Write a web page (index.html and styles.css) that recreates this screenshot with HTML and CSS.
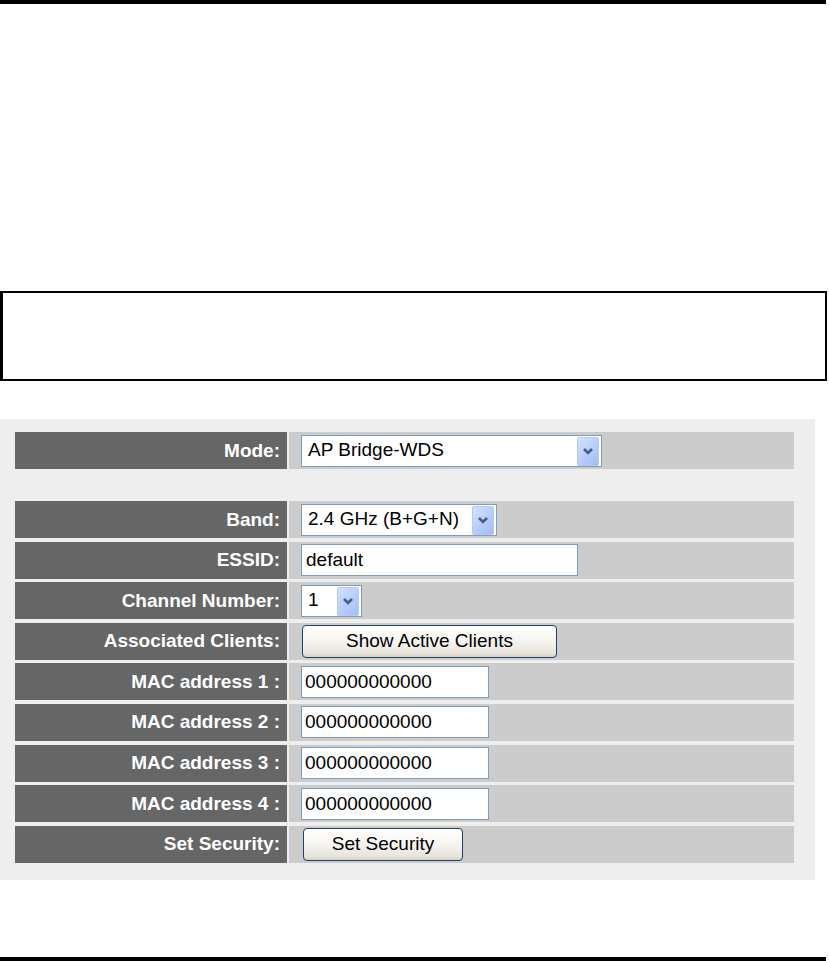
FILE: index.html
```html
<!DOCTYPE html>
<html>
<head>
<meta charset="utf-8">
<title>AP Bridge-WDS</title>
<link rel="stylesheet" href="styles.css">
</head>
<body>
<div class="topbar"></div>
<div class="note"></div>
<div class="panel">
  <div class="row">
    <div class="label">Mode:</div>
    <div class="value">
      <div class="select sel-mode"><span class="sel-text">AP Bridge-WDS</span><span class="sel-btn"><svg width="14" height="10" viewBox="0 0 14 10"><path d="M3 3 L7 7 L11 3" fill="none" stroke="#4a5d80" stroke-width="2.6"/></svg></span></div>
    </div>
  </div>
  <div class="rows">
    <div class="row">
      <div class="label">Band:</div>
      <div class="value">
        <div class="select sel-band"><span class="sel-text">2.4 GHz (B+G+N)</span><span class="sel-btn"><svg width="14" height="10" viewBox="0 0 14 10"><path d="M3 3 L7 7 L11 3" fill="none" stroke="#4a5d80" stroke-width="2.6"/></svg></span></div>
      </div>
    </div>
    <div class="row">
      <div class="label">ESSID:</div>
      <div class="value"><input class="field essid" type="text" value="default"></div>
    </div>
    <div class="row">
      <div class="label">Channel Number:</div>
      <div class="value">
        <div class="select sel-chan"><span class="sel-text">1</span><span class="sel-btn"><svg width="14" height="10" viewBox="0 0 14 10"><path d="M3 3 L7 7 L11 3" fill="none" stroke="#4a5d80" stroke-width="2.6"/></svg></span></div>
      </div>
    </div>
    <div class="row">
      <div class="label">Associated Clients:</div>
      <div class="value"><button class="btn btn-clients" type="button">Show Active Clients</button></div>
    </div>
    <div class="row">
      <div class="label">MAC address 1 :</div>
      <div class="value"><input class="field mac" type="text" value="000000000000"></div>
    </div>
    <div class="row">
      <div class="label">MAC address 2 :</div>
      <div class="value"><input class="field mac" type="text" value="000000000000"></div>
    </div>
    <div class="row">
      <div class="label">MAC address 3 :</div>
      <div class="value"><input class="field mac" type="text" value="000000000000"></div>
    </div>
    <div class="row">
      <div class="label">MAC address 4 :</div>
      <div class="value"><input class="field mac" type="text" value="000000000000"></div>
    </div>
    <div class="row">
      <div class="label">Set Security:</div>
      <div class="value"><button class="btn btn-sec" type="button">Set Security</button></div>
    </div>
  </div>
</div>
<div class="bottombar"></div>
</body>
</html>
```

FILE: styles.css
```css
html, body {
  margin: 0;
  padding: 0;
  background: #ffffff;
}
body {
  font-family: "Liberation Sans", Arial, sans-serif;
  color: #000;
}
.topbar {
  width: 826px;
  height: 4px;
  background: #000;
}
.note {
  margin-top: 287px;
  width: 822px;
  height: 86px;
  border: 2px solid #000;
  border-left-width: 3px;
}
.panel {
  margin-top: 38px;
  width: 779px;
  background: #eeeeee;
  padding: 13px 21px 17px 15px;
}
.rows {
  margin-top: 32px;
  display: flex;
  flex-direction: column;
  gap: 3.6px;
}
.row {
  display: grid;
  grid-template-columns: 272px 505px;
  column-gap: 2px;
  height: 37px;
}
.label {
  background: #666666;
  color: #ffffff;
  font-weight: bold;
  font-size: 19px;
  text-align: right;
  padding-right: 7px;
  display: flex;
  align-items: center;
  justify-content: flex-end;
  white-space: nowrap;
}
.value {
  background: #cccccc;
  display: flex;
  align-items: center;
  padding-left: 12px;
}
.select {
  box-sizing: border-box;
  height: 32px;
  background: #fff;
  border: 1px solid #7f9db9;
  display: flex;
  align-items: center;
  justify-content: space-between;
  padding: 1px 2px 2px 6px;
  font-size: 19px;
}
.sel-mode { width: 301px; }
.sel-band { width: 196px; }
.sel-chan { width: 61px; }
.sel-text {
  white-space: nowrap;
}
.sel-btn {
  width: 22px;
  height: 29px;
  box-sizing: border-box;
  align-self: flex-start;
  border: 1px solid #b3c8f3;
  border-radius: 2px;
  background: linear-gradient(135deg, #d3e2fd 0%, #b6cdfa 55%, #a3bdf3 100%);
  display: flex;
  align-items: center;
  justify-content: center;
}
.field {
  box-sizing: border-box;
  height: 32px;
  border: 1px solid #7f9db9;
  background: #fff;
  font-family: "Liberation Sans", Arial, sans-serif;
  font-size: 19px;
  color: #000;
  padding: 0 3px;
  margin: 0;
  outline: none;
}
.essid { width: 277px; padding-left: 4px; }
.mac { width: 188px; }
.btn {
  box-sizing: border-box;
  height: 33px;
  border: 1px solid #1e416a;
  border-radius: 4px;
  background: linear-gradient(#ffffff 0%, #f5f4ef 50%, #e6e3da 90%, #d6d0c5 100%);
  font-family: "Liberation Sans", Arial, sans-serif;
  font-size: 19px;
  color: #000;
  padding: 0;
  margin: 0 0 0 1px;
}
.btn-clients { width: 255px; }
.btn-sec { width: 160px; margin-left: 2px; }
.bottombar {
  margin-top: 77px;
  width: 826px;
  height: 4px;
  background: #000;
}
```
